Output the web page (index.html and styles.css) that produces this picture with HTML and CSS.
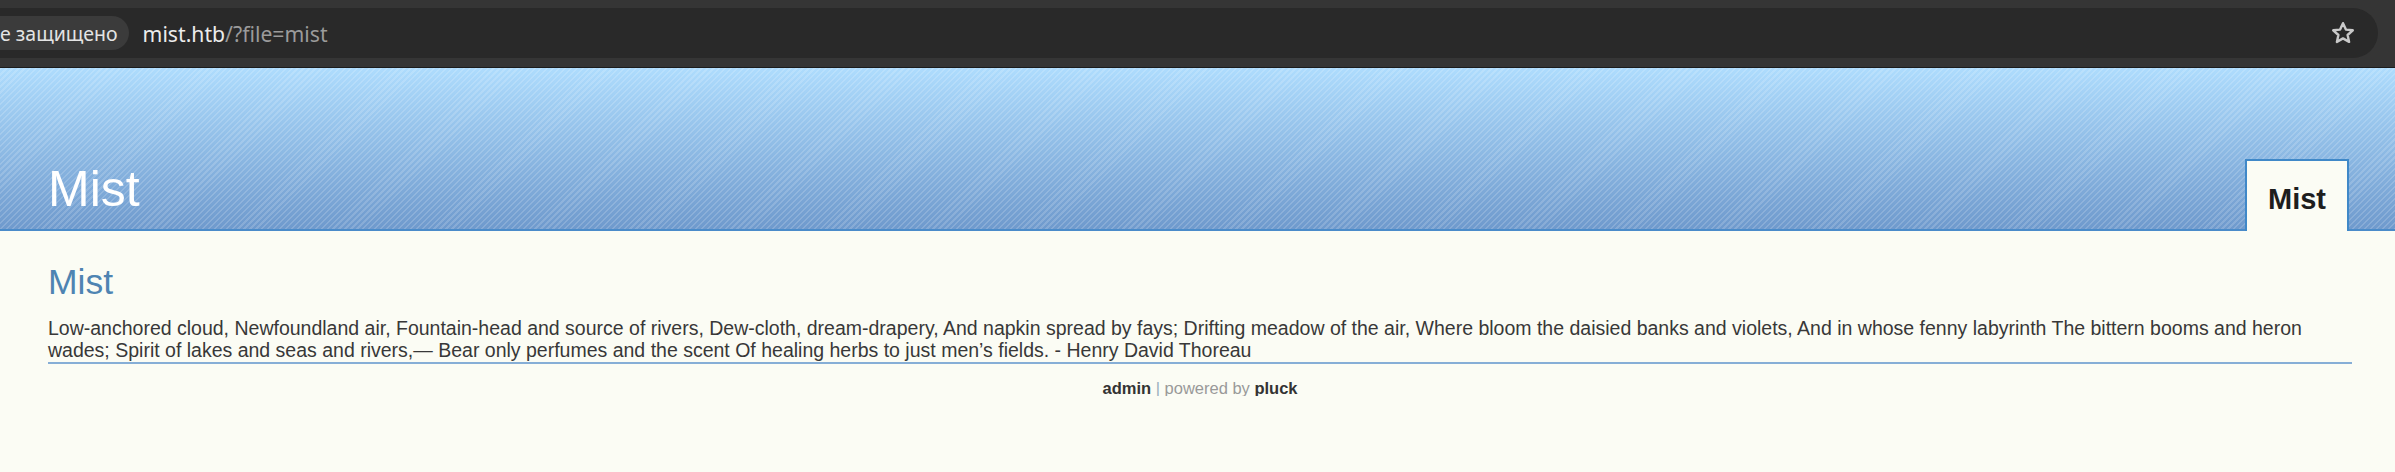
FILE: index.html
```html
<!DOCTYPE html>
<html lang="en">
<head>
<meta charset="utf-8">
<title>Mist</title>
<link rel="stylesheet" href="styles.css">
</head>
<body>
<div class="chrome">
  <div class="omnibox">
    <div class="chip">е защищено</div>
    <div class="url"><span class="host">mist.htb</span><span class="path">/?file=mist</span></div>
    <svg class="star" width="24" height="24" viewBox="0 0 24 24"><path d="M12 2.2l2.9 6.4 6.9.7-5.2 4.7 1.5 6.9L12 17.4l-6.1 3.5 1.5-6.9-5.2-4.7 6.9-.7z" fill="none" stroke="#c9c9c9" stroke-width="2.4" stroke-linejoin="round"/></svg>
  </div>
</div>
<header class="site-header">
  <div class="site-title">Mist</div>
  <nav class="tabs"><a class="tab" href="#">Mist</a></nav>
</header>
<main class="content">
  <h2 class="page-title">Mist</h2>
  <p class="page-text">Low-anchored cloud, Newfoundland air, Fountain-head and source of rivers, Dew-cloth, dream-drapery, And napkin spread by fays; Drifting meadow of the air, Where bloom the daisied banks and violets, And in whose fenny labyrinth The bittern booms and heron wades; Spirit of lakes and seas and rivers,— Bear only perfumes and the scent Of healing herbs to just men’s fields. - Henry David Thoreau</p>
  <div class="footer"><b>admin</b> <span class="sep">|</span> <span class="muted">powered by</span> <b>pluck</b></div>
</main>
</body>
</html>
```
FILE: styles.css
```css
html, body {
  margin: 0;
  padding: 0;
}
body {
  background: #fbfcf4;
  font-family: "Liberation Sans", Arial, sans-serif;
  color: #333;
}
.chrome {
  background: #353535;
  height: 68px;
  border-bottom: 1px solid #1c1c1c;
  box-sizing: border-box;
  padding: 8px 17px 10px 0;
}
.omnibox {
  height: 50px;
  background: #292929;
  border-radius: 0 25px 25px 0;
  display: flex;
  align-items: center;
  padding-right: 23px;
  font-family: "Noto Sans", "Open Sans", sans-serif;
}
.chip {
  height: 34px;
  background: #3b3b3b;
  border-radius: 0 17px 17px 0;
  display: flex;
  align-items: center;
  padding-right: 11px;
  color: #e4e4e4;
  font-size: 19.5px;
}
.url {
  margin-left: 14px;
  font-size: 21.2px;
  flex: 1;
}
.host { color: #ececec; }
.path { color: #9b9b9b; }
.star { display: block; }

.site-header {
  height: 163px;
  box-sizing: border-box;
  border-bottom: 2px solid #4a8bc9;
  background:
    repeating-linear-gradient(135deg, rgba(255,255,255,0.16) 0 1.6px, rgba(255,255,255,0) 1.6px 4.2px),
    linear-gradient(#aedcfd, #6f9acd);
  display: flex;
  align-items: flex-end;
  justify-content: space-between;
  padding: 0 46px 0 48px;
}
.site-title {
  color: #fff;
  font-size: 50px;
  line-height: 1;
  margin-bottom: 15px;
}
.tabs {
  display: flex;
  margin-bottom: -2px;
}
.tab {
  display: block;
  background: #fbfcf4;
  border: 2px solid #3f88c8;
  border-bottom: 0;
  padding: 24px 21px 17px;
  font-size: 29px;
  line-height: 1;
  font-weight: bold;
  color: #1e1e1e;
  text-decoration: none;
}
.content {
  padding: 0 43px 0 48px;
}
.page-title {
  margin: 34px 0 0;
  font-size: 35.5px;
  font-weight: normal;
  line-height: 1;
  color: #4e84b2;
}
.page-text {
  margin: 16px 0 0;
  padding-bottom: 1px;
  font-size: 19.5px;
  line-height: 22px;
  color: #383838;
  border-bottom: 2px solid #86aed6;
}
.footer {
  margin-top: 16px;
  text-align: center;
  font-size: 16.5px;
  line-height: 1;
  color: #999;
}
.footer b { color: #333; }
.sep { color: #9aaec0; }
```
